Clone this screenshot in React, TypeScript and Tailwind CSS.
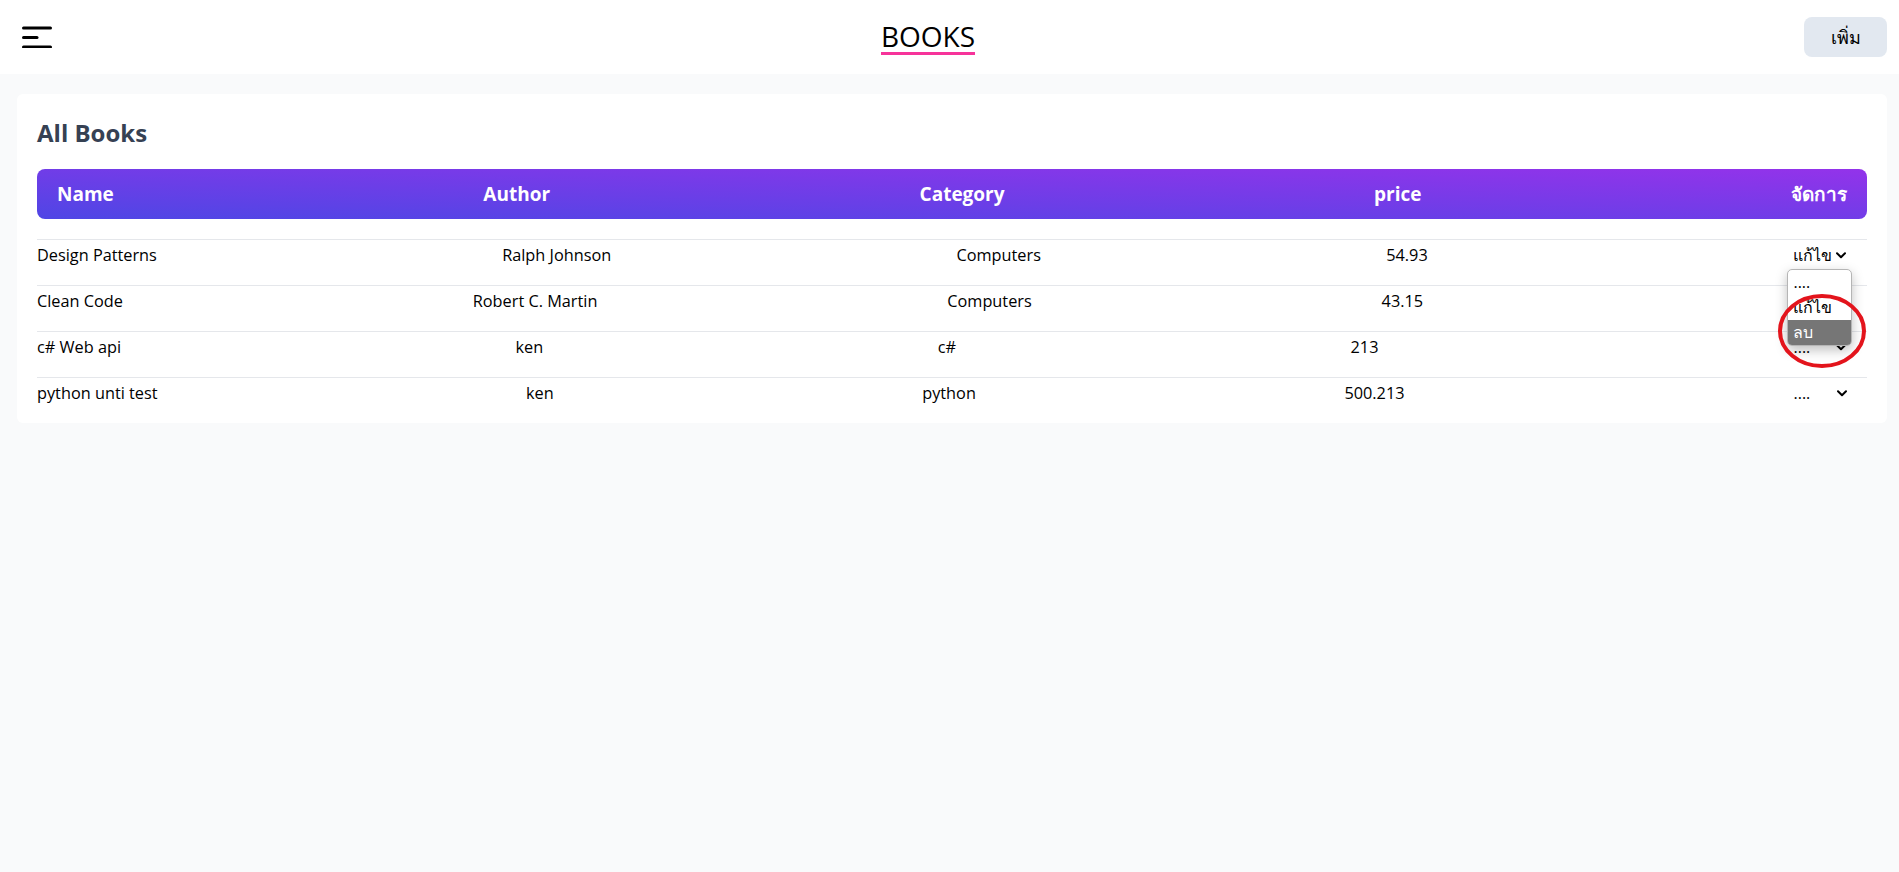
import React from "react";

interface IBook {
  name: string;
  author: string;
  category: string;
  price: string;
  action: string;
}

const books: IBook[] = [
  { name: "Design Patterns", author: "Ralph Johnson", category: "Computers", price: "54.93", action: "แก้ไข" },
  { name: "Clean Code", author: "Robert C. Martin", category: "Computers", price: "43.15", action: "...." },
  { name: "c# Web api", author: "ken", category: "c#", price: "213", action: "...." },
  { name: "python unti test", author: "ken", category: "python", price: "500.213", action: "...." },
];

const Chevron = () => (
  <svg width="10" height="7" viewBox="0 0 10 7" className="shrink-0">
    <path d="M1 1.2l4 4 4-4" fill="none" stroke="#000" strokeWidth="2" strokeLinecap="round" strokeLinejoin="round" />
  </svg>
);

const ActionSelect: React.FC<{ value: string; open?: boolean }> = ({ value, open }) => (
  <div className="relative w-[65px] h-[24px] flex items-center justify-between px-[6px]">
    <span className="leading-6">{value}</span>
    <Chevron />
    {open && (
      <>
        <div className="absolute left-0 top-[26px] w-[65px] z-10 bg-white border border-[#b5b5b5] rounded-[5px] shadow-[0_4px_12px_rgba(0,0,0,0.25)] overflow-hidden">
          <div className="h-[25px] px-[5px] leading-[25px]">....</div>
          <div className="h-[25px] px-[5px] leading-[25px]">แก้ไข</div>
          <div className="h-[25px] px-[5px] leading-[25px] bg-[#767676] text-white">ลบ</div>
        </div>
        <svg
          width="100"
          height="86"
          viewBox="0 0 100 86"
          className="absolute left-[-15px] top-[45px] z-20 pointer-events-none"
        >
          <ellipse cx="50" cy="43" rx="42" ry="35" fill="none" stroke="#e3141c" strokeWidth="4" />
        </svg>
      </>
    )}
  </div>
);

const BookRow: React.FC<{ book: IBook; open?: boolean }> = ({ book, open }) => (
  <div className="flex justify-between items-start h-[46px] pt-[3px] border-t border-[#e5e7eb] text-[16.3px] text-black">
    <span className="leading-6">{book.name}</span>
    <span className="leading-6">{book.author}</span>
    <span className="leading-6">{book.category}</span>
    <span className="leading-6">{book.price}</span>
    <div className="w-[94px] flex justify-center text-base">
      <ActionSelect value={book.action} open={open} />
    </div>
  </div>
);

const App = () => {
  return (
    <div className="min-h-screen bg-gray-50 font-['Open_Sans','Noto_Sans',sans-serif]">
      <header className="h-[74px] bg-white flex items-center justify-between pl-[22px] pr-3">
        <svg width="30" height="22" viewBox="0 0 30 22">
          <g stroke="#000" strokeWidth="3" strokeLinecap="round">
            <line x1="1.5" y1="2" x2="28.5" y2="2" />
            <line x1="1.5" y1="11.5" x2="15" y2="11.5" />
            <line x1="1.5" y1="21" x2="28.5" y2="21" />
          </g>
        </svg>
        <h1 className="text-[28px] leading-[32px] font-medium text-black border-b-[3px] border-pink-500">BOOKS</h1>
        <button className="w-[83px] h-10 rounded-lg bg-slate-200 text-lg text-black">เพิ่ม</button>
      </header>

      <main className="pt-5 pl-[17px] pr-3">
        <div className="bg-white rounded-md px-5 pt-[23px]">
          <h2 className="text-2xl leading-8 font-bold text-gray-700 mb-5">All Books</h2>
          <div className="h-[50px] rounded-lg bg-linear-to-tr/srgb from-[#4f46e5] to-[#9333ea] flex items-center justify-between px-5 text-white font-bold text-[19px]">
            <span>Name</span>
            <span>Author</span>
            <span>Category</span>
            <span>price</span>
            <span>จัดการ</span>
          </div>
          <div className="mt-5">
            {books.map((book, index) => (
              <BookRow key={book.name} book={book} open={index === 0} />
            ))}
          </div>
        </div>
      </main>
    </div>
  );
};

export default App;
